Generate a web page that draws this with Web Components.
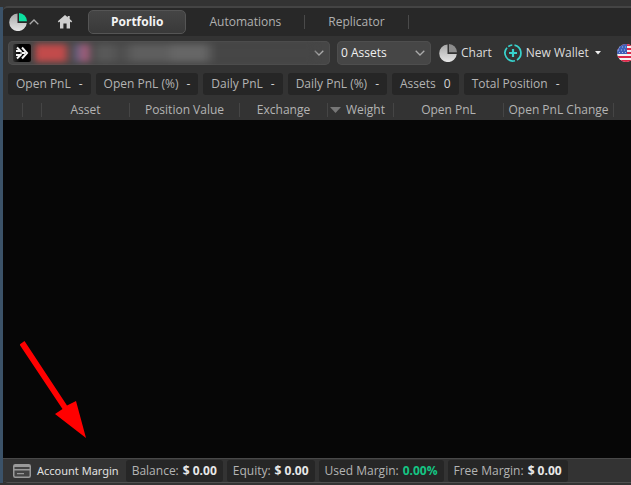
<!DOCTYPE html>
<html lang="en">
<head>
<meta charset="utf-8">
<title>Portfolio</title>
<style>
html,body{height:100%}
body{margin:0;background:#333;color:#b4b4b4;font:12px/16px "Open Sans","Noto Sans",sans-serif;overflow:hidden}
</style>
</head>
<body>
<portfolio-app></portfolio-app>
<script>
const define = (name, html, setup) => customElements.define(name, class extends HTMLElement {
  connectedCallback() {
    if (this.shadowRoot) return;
    const root = this.attachShadow({mode: 'open'});
    root.innerHTML = html;
    if (setup) setup(this, root);
  }
});

define('pie-icon', `
<style>:host{display:block;width:18px;height:18px}svg{display:block}</style>
<svg width="18" height="18" viewBox="0 0 18 18" aria-hidden="true">
<defs><linearGradient id="g" x2="0" y2="1"><stop stop-color="#a8a8a8"/><stop offset="1" stop-color="#e6e6e6"/></linearGradient></defs>
<path d="M8.5 .5A8.8 8.8 0 1 0 17.8 10H8.5Z" fill="url(#g)"/><path id="s" d="M10 0A8.4 8.4 0 0 1 18 8.2H10Z"/></svg>`,
(el, root) => root.querySelector('#s').setAttribute('fill', el.getAttribute('slice') || '#8c8c8c'));

define('chevron-icon', `
<style>:host{display:block;pointer-events:none}:host([up]) svg{transform:rotate(180deg)}svg{display:block}</style>
<svg width="10" height="6" viewBox="0 0 10 6" fill="none" stroke="#aaa" stroke-width="1.3" aria-hidden="true"><path d="M.7.7 5 5 9.3.7"/></svg>`);

define('nav-tab', `
<style>
:host{display:flex;align-items:center}
button{font:inherit;color:#b0b0b0;background:none;border:1px solid transparent;border-radius:5px;height:24px;padding:0 22px;cursor:pointer}
:host([active]) button{background:linear-gradient(#454545,#393939);border-color:#555;color:#f4f4f4;font-weight:bold}
:host([divided])::after{content:"";width:1px;height:14px;background:#4a4a4a}
</style><button type="button"><slot></slot></button>`);

define('tab-bar', `
<style>
:host{display:flex;align-items:center;height:28px;background:#282828;border-radius:4px 0 0 0;padding-left:6px}
button{display:flex;align-items:center;gap:2px;border:0;background:none;padding:0;cursor:pointer}
.home{margin:0 15px 0 18px}
</style>
<button type="button" aria-label="Main menu"><pie-icon slice="#0ce0a0"></pie-icon><chevron-icon up></chevron-icon></button>
<button class="home" type="button" aria-label="Home"><svg width="16" height="14" viewBox="0 0 16 14" fill="#d0d0d0"><path d="M8 0 .8 6.2 1.8 7.4 3 6.5V13.5H6.4V8.5H9.6V13.5H13V6.5L14.2 7.4 15.2 6.2 12.7 4V1H10.7V2.3Z"/></svg></button>
<slot></slot>`);

define('wallet-select', `
<style>
:host{display:grid;grid-template-columns:minmax(0,1fr);height:24px;border-radius:5px;background:#464646;box-shadow:inset 0 0 0 1px #4e4e4e;overflow:hidden;align-items:center}
select,.show{grid-area:1/1}
select{appearance:none;border:0;background:none;color:transparent;font:inherit;width:100%;height:24px;cursor:pointer}
.show{display:flex;align-items:center;padding:0 6px 0 5px;pointer-events:none}
.show svg{flex:none}
.mask{flex:1;height:18px;margin-left:4px;filter:blur(3px);background:linear-gradient(90deg,#a44 0 1px,#c24b4b 2px 28px,#484848 36px,#686080 42px,#9c5c78 48px 52px,#4a4a4a 58px,#585858 64px 76px,#4c4c4c 86px,#5e5e5e 100px 130px,#666 140px 168px,#464646 182px)}
</style>
<select aria-label="Wallet"><option></option></select>
<div class="show">
<svg width="18" height="18" viewBox="0 0 18 18" aria-hidden="true"><defs><linearGradient id="b"><stop stop-color="#333"/><stop offset=".4" stop-color="#000"/></linearGradient></defs><rect width="18" height="18" rx="2" fill="url(#b)"/><g fill="none" stroke="#f4f4f4" stroke-width="2"><path d="M9 3.500 14 9 9 14.500M4 3.500 8.500 8M4 14.500 8.500 10M3 7H7M3 11H7M8.500 9H12"/></g></svg>
<div class="mask"></div><chevron-icon></chevron-icon></div>`);

define('asset-select', `
<style>
:host{display:grid;grid-template-columns:1fr 16px;align-items:center;width:94px;height:24px;border-radius:5px;background:#464646;box-shadow:inset 0 0 0 1px #4e4e4e;flex:none}
select{grid-area:1/1/2/3;appearance:none;border:0;background:none;color:#f0f0f0;font:inherit;height:24px;padding:0 4px;cursor:pointer}
chevron-icon{grid-area:1/2}
</style><select aria-label="Assets"><option>0 Assets</option></select><chevron-icon></chevron-icon>`);

define('tool-button', `
<style>:host{display:block;flex:none}button{display:flex;align-items:center;gap:4px;height:24px;padding:0;border:0;background:none;color:#dcdcdc;font:inherit;white-space:nowrap;cursor:pointer}</style>
<button type="button"><slot name="icon"></slot><slot></slot><slot name="end"></slot></button>`);

define('tool-bar', `
<style>
:host{display:flex;align-items:center;padding:4px 0 8px 5px;margin-top:1px}
wallet-select{width:322px;flex:none;margin-right:7px}
.chart{margin-left:8px}.wallet{margin-left:12px}.flag{margin-left:12px}
svg{display:block;flex:none}
</style>
<wallet-select></wallet-select><asset-select></asset-select>
<tool-button class="chart"><pie-icon slot="icon"></pie-icon>Chart</tool-button>
<tool-button class="wallet"><svg slot="icon" width="18" height="18" viewBox="0 0 18 18" fill="none" stroke="#38d2cc" stroke-width="1.7"><path d="M10.5 1.2A8 8 0 0 1 13 15.9M11 16.7A8 8 0 0 1 3 3.7M4.3 2.6A8 8 0 0 1 8.3 1"/><path d="M9 5V13M5 9H13" stroke-width="2.2"/></svg>New Wallet<svg slot="end" width="12" height="6" viewBox="0 0 12 6"><path d="M2 1H8L5 4.5Z" fill="#eee"/></svg></tool-button>
<tool-button class="flag"><svg slot="icon" role="img" aria-label="United States" width="18" height="18" viewBox="0 0 18 18"><defs><clipPath id="c"><circle cx="9" cy="9" r="9"/></clipPath></defs><g clip-path="url(#c)"><path fill="#f2f2f2" d="M0 0H18V18H0Z"/><path fill="#dc2748" d="M0 0H18V2H0ZM0 4H18V6H0ZM0 8H18V10H0ZM0 12H18V14H0ZM0 16H18V18H0Z"/><path fill="#3f61b8" d="M0 0H10V10H0Z"/><path stroke="#a9bce8" stroke-dasharray="1 2" d="M2 3H9M1 6H9M2 8.5H9"/></g></svg></tool-button>`);

define('stat-chip', `
<style>
:host{display:flex;align-items:center;height:22px;padding:0 8px;border-radius:3px;background:#262626;white-space:nowrap;flex:none;gap:8px}
:host([money]){gap:4px;padding:0 6px}
b{font-weight:normal;color:#d4d4d4}
:host([money]) b{font-weight:bold;color:#e8e8e8}
:host([money][good]) b{color:#14c584}
</style><span><slot></slot></span><b></b>`,
(el, root) => root.querySelector('b').textContent = el.getAttribute('value'));

define('asset-table', `
<style>
:host{display:block;flex:1;background:#060606}
table{table-layout:fixed;border-collapse:collapse;width:100%;background:#333}
th{font-weight:normal;padding:0;height:20px;white-space:nowrap}
th>div{display:flex;align-items:center;justify-content:center;height:14px;line-height:14px;border-right:1px solid #454545}
th:last-child>div{border:0}
.sorted>div{justify-content:space-between;padding:0 8px 0 2px}
.c1{width:20px}.c2{width:19px}.c3{width:88px}.c4{width:110px}.c5{width:88px}.c6{width:66px}.c7{width:110px}.c8{width:110px}
</style>
<table><colgroup><col class="c1"><col class="c2"><col class="c3"><col class="c4"><col class="c5"><col class="c6"><col class="c7"><col class="c8"><col></colgroup>
<thead><tr><th><div></div></th><th><div></div></th><th><div>Asset</div></th><th><div>Position Value</div></th><th><div>Exchange</div></th><th class="sorted" aria-sort="descending"><div><svg width="11" height="6" viewBox="0 0 11 6" aria-hidden="true"><path d="M0 0H11L5.5 6Z" fill="#777"/></svg>Weight</div></th><th><div>Open PnL</div></th><th><div>Open PnL Change</div></th><th><div></div></th></tr></thead><tbody></tbody></table>`);

define('margin-bar', `
<style>
:host{display:flex;align-items:center;gap:4px;height:25px;padding-left:10px;background:#333;border-top:1px solid #484848;border-bottom:1px solid #505050;border-radius:0 0 0 4px;box-sizing:border-box}
h2{font:11px/16px "Noto Sans",sans-serif;color:#e0e0e0;margin:0 3px 0 0;display:flex;align-items:center;gap:6px;white-space:nowrap}
</style>
<h2><svg width="18" height="14" viewBox="0 0 18 14" aria-hidden="true"><rect x=".75" y=".75" width="16.5" height="12.5" rx="1.5" fill="#444" stroke="#999" stroke-width="1.5"/><path d="M1 1H17V3H1ZM1 5H17V6.5H1ZM4 9H11V10.3H4Z" fill="#999"/></svg>Account Margin</h2><slot></slot>`);

define('portfolio-app', `
<style>
:host{display:flex;flex-direction:column;box-sizing:border-box;height:100vh;padding:6px 0 2px;background:linear-gradient(#333 0 7px,transparent 7px calc(100% - 2px),#333 calc(100% - 2px)),linear-gradient(90deg,#3b5268 3px,#333 3px)}
main{display:flex;flex-direction:column;flex:1;min-height:0;margin-left:3px;border-top:2px solid #444;border-radius:5px 0 0 5px;background:#333;overflow:hidden}
.stats{display:flex;gap:5px;padding:0 0 5px 5px}
.arrow{position:absolute;left:20px;top:340px;pointer-events:none}
</style>
<main>
<tab-bar><nav-tab active>Portfolio</nav-tab><nav-tab divided>Automations</nav-tab><nav-tab divided>Replicator</nav-tab></tab-bar>
<tool-bar></tool-bar>
<div class="stats"><stat-chip value="-">Open PnL</stat-chip><stat-chip value="-">Open PnL (%)</stat-chip><stat-chip value="-">Daily PnL</stat-chip><stat-chip value="-">Daily PnL (%)</stat-chip><stat-chip value="0">Assets</stat-chip><stat-chip value="-">Total Position</stat-chip></div>
<asset-table></asset-table>
<margin-bar><stat-chip money value="$ 0.00">Balance:</stat-chip><stat-chip money value="$ 0.00">Equity:</stat-chip><stat-chip money good value="0.00%">Used Margin:</stat-chip><stat-chip money value="$ 0.00">Free Margin:</stat-chip></margin-bar>
</main>
<svg class="arrow" width="70" height="100" viewBox="20 340 70 100" aria-hidden="true"><path d="M24.5 341 67 405.500 76 401 86 438 55 414 62.500 409 19.500 344.500Z" fill="#f00"/></svg>`);
</script>
</body>
</html>
